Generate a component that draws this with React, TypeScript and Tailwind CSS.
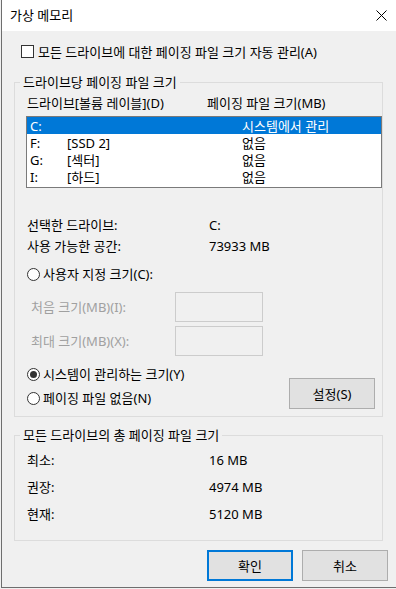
import React from 'react';

const font = { fontFamily: '"Noto Sans", "Noto Sans CJK KR", sans-serif' };

function Radio({ checked = false }: { checked?: boolean }) {
  return (
    <span className="w-[13px] h-[13px] rounded-full border border-[#333333] bg-white flex items-center justify-center shrink-0">
      {checked && <span className="w-[7px] h-[7px] rounded-full bg-[#333333]"></span>}
    </span>
  );
}

const drives = [
  { letter: 'C:', label: '', size: '시스템에서 관리', selected: true },
  { letter: 'F:', label: '[SSD 2]', size: '없음' },
  { letter: 'G:', label: '[섹터]', size: '없음' },
  { letter: 'I:', label: '[하드]', size: '없음' },
];

export default function App() {
  return (
    <div className="w-[396px] h-[589px] bg-[#f0f0f0] pl-px text-[13px] leading-[16px] text-black" style={font}>
      <div className="w-[395px] h-[588px] border-l border-b border-[#6e6e6e] flex flex-col">
        {/* title bar */}
        <div className="h-[31px] bg-white flex items-center justify-between pl-2 pr-[9px] pb-[2px]">
          <span>가상 메모리</span>
          <svg width="11" height="11" viewBox="0 0 11 11" className="mt-[1px]">
            <path d="M0.5 0.5 L10.5 10.5 M10.5 0.5 L0.5 10.5" stroke="#000" strokeWidth="1" />
          </svg>
        </div>

        {/* auto manage */}
        <div className="flex items-center mt-[14px] ml-[19px] h-[13px]">
          <span className="w-[13px] h-[13px] border border-[#333333] bg-white"></span>
          <span className="ml-[4px]">모든 드라이브에 대한 페이징 파일 크기 자동 관리(A)</span>
        </div>

        {/* per-drive group */}
        <fieldset className="mt-[16px] ml-[12px] w-[369px] border border-[#dcdcdc] pl-[12px] pb-[7px]">
          <legend className="-ml-[7px] px-[3px]">드라이브당 페이징 파일 크기</legend>
          <div className="flex mt-[5px] h-[16px]">
            <span className="w-[180px]">드라이브[볼륨 레이블](D)</span>
            <span>페이징 파일 크기(MB)</span>
          </div>
          <div className="mt-[5px] -ml-px w-[356px] h-[72px] border border-[#7a7a7a] bg-white">
            {drives.map((d) => (
              <div
                key={d.letter}
                className={
                  'flex items-center h-[17px] pl-[3px] ' +
                  (d.selected ? 'bg-[#0078d7] text-white' : '')
                }
              >
                <span className="w-[37px]">{d.letter}</span>
                <span className="w-[175px]">{d.label}</span>
                <span>{d.size}</span>
              </div>
            ))}
          </div>

          <div className="flex mt-[29px] h-[16px]">
            <span className="w-[182px]">선택한 드라이브:</span>
            <span>C:</span>
          </div>
          <div className="flex mt-[5px] h-[16px]">
            <span className="w-[182px]">사용 가능한 공간:</span>
            <span>73933 MB</span>
          </div>

          <div className="flex items-center gap-[3px] mt-[12px] h-[16px]">
            <Radio />
            <span>사용자 지정 크기(C):</span>
          </div>
          <div className="flex items-center mt-[10px] text-[#a0a0a0]">
            <span className="w-[148px] pl-[4px]">처음 크기(MB)(I):</span>
            <span className="w-[88px] h-[30px] border border-[#cccccc]"></span>
          </div>
          <div className="flex items-center mt-[4px] text-[#a0a0a0]">
            <span className="w-[148px] pl-[4px]">최대 크기(MB)(X):</span>
            <span className="w-[88px] h-[30px] border border-[#cccccc]"></span>
          </div>

          <div className="flex mt-[10px]">
            <div className="flex flex-col gap-[8px]">
              <div className="flex items-center gap-[3px] h-[16px]">
                <Radio checked />
                <span>시스템이 관리하는 크기(Y)</span>
              </div>
              <div className="flex items-center gap-[3px] h-[16px]">
                <Radio />
                <span>페이징 파일 없음(N)</span>
              </div>
            </div>
            <button className="ml-auto mr-[7px] mt-[12px] w-[86px] h-[31px] bg-[#e1e1e1] border border-[#adadad]">
              설정(S)
            </button>
          </div>
        </fieldset>

        {/* totals group */}
        <fieldset className="mt-[10px] ml-[12px] w-[369px] border border-[#dcdcdc] pl-[12px] pb-[18px]">
          <legend className="-ml-[7px] px-[3px]">모든 드라이브의 총 페이징 파일 크기</legend>
          <div className="flex mt-[9px] h-[16px]">
            <span className="w-[182px]">최소:</span>
            <span>16 MB</span>
          </div>
          <div className="flex mt-[11px] h-[16px]">
            <span className="w-[182px]">권장:</span>
            <span>4974 MB</span>
          </div>
          <div className="flex mt-[11px] h-[16px]">
            <span className="w-[182px]">현재:</span>
            <span>5120 MB</span>
          </div>
        </fieldset>

        <div className="flex justify-end gap-[9px] mt-[9px] pr-[8px]">
          <button className="w-[86px] h-[31px] bg-[#e1e1e1] border-2 border-[#0078d7]">확인</button>
          <button className="w-[86px] h-[31px] bg-[#e1e1e1] border border-[#adadad]">취소</button>
        </div>
      </div>
    </div>
  );
}
